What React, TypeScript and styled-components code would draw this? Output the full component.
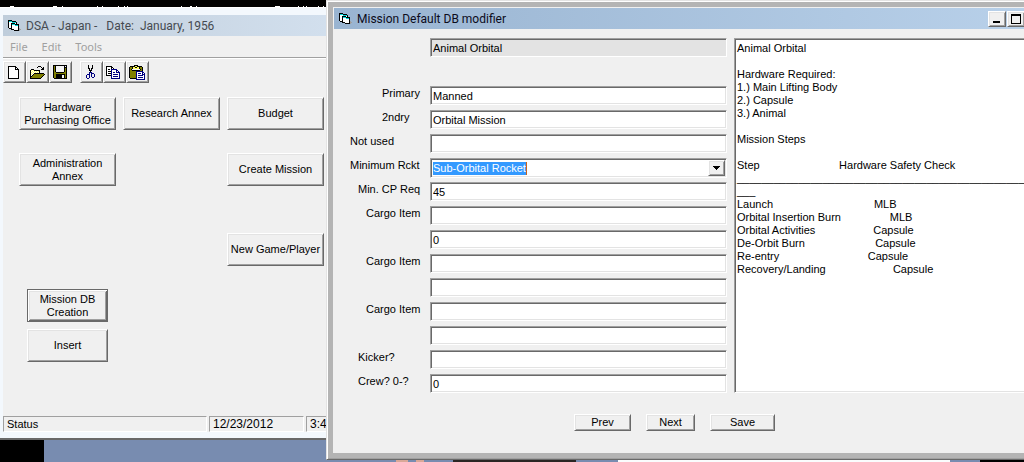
import React, { useRef } from "react";
import styled, { createGlobalStyle, css } from "styled-components";

const GlobalStyle = createGlobalStyle`
  * { box-sizing: border-box; }
  html, body { margin: 0; padding: 0; }
  body {
    font-family: "Liberation Sans", Arial, sans-serif;
    font-size: 11px;
    line-height: 13px;
    color: #000;
    overflow: hidden;
  }
  button, input, select, textarea { font: inherit; color: inherit; }
`;

const face = "#f0f0f0";

const raised = css`
  border: 1px solid;
  border-color: #fff #696969 #696969 #fff;
  box-shadow: inset 1px 1px #e3e3e3, inset -1px -1px #a0a0a0;
`;

const sunken = css`
  border: 1px solid;
  border-color: #a0a0a0 #fff #fff #a0a0a0;
  box-shadow: inset 1px 1px #696969, inset -1px -1px #e3e3e3;
`;

/* ---------- pixel icons ---------- */

const palette: Record<string, string> = {
  k: "#000000",
  w: "#ffffff",
  c: "#00d8d8",
  g: "#a0a0a0",
  o: "#808000",
  y: "#ffff60",
  l: "#f4f4f4",
  n: "#000080",
};

function PixelIcon({ rows }: { rows: string[] }) {
  const width = Math.max(...rows.map((r) => r.length));
  return (
    <svg
      width={width}
      height={rows.length}
      viewBox={`0 0 ${width} ${rows.length}`}
      shapeRendering="crispEdges"
      aria-hidden="true"
    >
      {rows.flatMap((row, y) =>
        row.split("").map((ch, x) =>
          palette[ch] ? (
            <rect key={`${x}-${y}`} x={x} y={y} width="1" height="1" fill={palette[ch]} />
          ) : null
        )
      )}
    </svg>
  );
}

const formIcon = [
  "kkkk.........",
  "kccckkkk.....",
  "kwwwcccck....",
  "kwwkkkkwk....",
  "kwwkccckkkk..",
  "kwwkwwwccck..",
  "kwwkwwwwwwk..",
  "kwwkwwwwwwk..",
  ".kkkwwwwwwkg.",
  "...kkkwwwwkgg",
  "......kkkkkg.",
];

const newIcon = [
  "kkkkkkkk...",
  "kwwwwwwkk..",
  "kwwwwwwkwk.",
  "kwwwwwwkkkk",
  "kwwwwwwwwwk",
  "kwwwwwwwwwk",
  "kwwwwwwwwwk",
  "kwwwwwwwwwk",
  "kwwwwwwwwwk",
  "kwwwwwwwwwk",
  "kwwwwwwwwwk",
  "kwwwwwwwwwk",
  "kkkkkkkkkkk",
];

const openIcon = [
  ".........kkk....",
  "........k...k.k.",
  ".............kk.",
  "..kkk.......kkk.",
  ".kywykkkkkk.....",
  ".kwywywywyk.....",
  ".kywywywywk.....",
  ".kwywkkkkkkkkkk.",
  ".kywkooooooooook",
  ".kwkooooooooook.",
  ".kkooooooooook..",
  ".kooooooooook...",
  ".kkkkkkkkkkk....",
];

const saveIcon = [
  "kkkkkkkkkkkkkk",
  "kokllllllllklk",
  "kokllllllllkkk",
  "kokllllllllkok",
  "kokllllllllkok",
  "kokllllllllkok",
  "kokllllllllkok",
  "kookkkkkkkkook",
  "kooooooooooook",
  "kookkkkkkkkkok",
  "kookkkkkkllkok",
  "kookkkkkkllkok",
  "kookkkkkkllkok",
  ".kkkkkkkkkkkkk",
];

const cutIcon = [
  "..k...k..",
  "..k...k..",
  "..k...k..",
  "..kk.kk..",
  "...k.k...",
  "...kkk...",
  "....k....",
  "...nnn...",
  "...n.nnn.",
  ".nnn.n..n",
  "n..n.n..n",
  "n..n.n..n",
  "n..n..nn.",
  ".nn......",
];

const copyIcon = [
  "kkkkkk.........",
  "kwwwwkk........",
  "kwwwwkwk.......",
  "kwkkwnnnnnn....",
  "kwwwwnwwwwnn...",
  "kwkkknwwwwnwn..",
  "kwwwwnwnnwnnnn.",
  "kwkkknwwwwwwwn.",
  "kwwwwnwnnnnnwn.",
  "kkkkknwwwwwwwn.",
  ".....nwnnnnnwn.",
  ".....nwwwwwwwn.",
  ".....nnnnnnnnn.",
];

const pasteIcon = [
  ".....kkkk.......",
  ".kkkkkyykkkkk...",
  "kookyykkyykook..",
  "kookyyyyyykook..",
  "kokllllllllkok..",
  "kookkkkkkkkook..",
  "koooooonnnnnnn..",
  "koooooonwwwwwnn.",
  "koooooonwnnnwnwn",
  "koooooonwwwwwnnn",
  "koooooonwnnnnnwn",
  "koooooonwwwwwwwn",
  "koooooonwnnnnnwn",
  ".kkkkkknwwwwwwwn",
  ".......nnnnnnnnn",
];

/* ---------- desktop ---------- */

const Desktop = styled.main`
  position: relative;
  min-height: 100vh;
  overflow: hidden;
  background: linear-gradient(
    to right,
    #000 44px,
    #788cb0 44px 396px,
    #d9a898 396px 408px,
    #788cb0 408px 416px,
    #d9a898 416px 424px,
    #788cb0 424px 453px,
    #2a2624 453px 576px,
    #788cb0 576px 618px,
    #fafcfd 618px 950px,
    #788cb0 950px 980px,
    #000 980px
  );
`;

const TopStrip = styled.div`
  height: 7px;
  background: #000;
  display: flex;
  align-items: flex-end;
`;

/* ---------- windows ---------- */

const MainWindow = styled.section`
  position: absolute;
  top: 7px;
  left: 0;
  width: 420px;
  padding: 7px 6px 6px 3px;
  background: #f3f8fd;
  border-top: 1px solid #fff;
  border-bottom: 2px solid #696969;
`;

const Dialog = styled.section`
  position: absolute;
  top: 0;
  left: 326px;
  right: -29px;
  border: 1px solid;
  border-color: #e3e3e3 #696969 #696969 #e3e3e3;
  box-shadow: inset 1px 1px #fff, inset -1px -1px #a0a0a0;
  background: #b4b4b4;
  padding: 6px;
`;

const DialogInner = styled.div`
  background: ${face};
  border-top: 1px solid ${face};
  border-left: 1px solid ${face};
`;

const TitleBar = styled.header<{ $active?: boolean }>`
  display: flex;
  align-items: center;
  height: 21px;
  padding: 0 2px 0 5px;
  gap: 5px;
  color: ${(p) => (p.$active ? "#0c0c1c" : "#454a50")};
  background: ${(p) =>
    p.$active
      ? "linear-gradient(to right, #99b4d1, #b9d1ea)"
      : "linear-gradient(to right, #bfcddb, #d7e4f2)"};
`;

const Title = styled.h1`
  flex: 1;
  margin: 0;
  font: 400 12px/16px Roboto, "Noto Sans", sans-serif;
  white-space: pre;
`;

const CaptionButton = styled.button`
  ${raised}
  width: 18px;
  height: 16px;
  padding: 0;
  background: ${face};
  display: grid;
  place-items: center;
`;

const CaptionGroup = styled.div`
  display: flex;
  gap: 1px;
`;

const Body = styled.div`
  background: ${face};
`;

/* ---------- main window parts ---------- */

const MenuBar = styled.nav`
  display: flex;
  height: 21px;
  padding: 0 7px;
  gap: 14px;
  align-items: center;
`;

const MenuItem = styled.button`
  border: 0;
  padding: 0;
  background: none;
  color: #a0a0a0;
  font-family: "Noto Sans", sans-serif;
  font-size: 11px;
  line-height: 15px;
`;

const ToolBar = styled.div`
  display: flex;
  gap: 8px;
  padding-top: 3px;
  border-top: 1px solid #a0a0a0;
  box-shadow: inset 0 1px #fff;
`;

const ToolGroup = styled.div`
  display: flex;
`;

const ToolButton = styled.button`
  ${raised}
  width: 23px;
  height: 22px;
  padding: 0 2px 0 0;
  background: ${face};
  display: grid;
  place-items: center;
`;

const Launcher = styled.div`
  display: flex;
  flex-direction: column;
  gap: 23px;
  padding: 14px 16px 54px;
`;

const LauncherRow = styled.div<{ $spaced?: boolean }>`
  display: grid;
  grid-template-columns: repeat(3, 97px);
  gap: 7px;
  margin-top: ${(p) => (p.$spaced ? "24px" : "0")};
`;

const LauncherStack = styled.div`
  display: flex;
  flex-direction: column;
  gap: 7px;
  width: 81px;
  margin-left: 8px;
`;

const CommandButton = styled.button<{ $column?: number; $current?: boolean }>`
  ${raised}
  height: 33px;
  padding: 0 2px;
  background: ${face};
  text-align: center;
  grid-column: ${(p) => p.$column ?? "auto"};
  ${(p) =>
    p.$current &&
    css`
      border-color: #696969;
      box-shadow: inset 1px 1px #fff, inset -1px -1px #696969, inset 2px 2px #e3e3e3,
        inset -2px -2px #a0a0a0;
    `}
`;

const StatusBar = styled.footer`
  display: grid;
  grid-template-columns: 204px 95px 1fr;
  gap: 2px;
`;

const StatusPanel = styled.div`
  height: 16px;
  padding: 1px 3px;
  border: 1px solid;
  border-color: #a0a0a0 #fff #fff #a0a0a0;
`;

const StatusNumber = styled(StatusPanel)`
  font-size: 12px;
`;

/* ---------- dialog parts ---------- */

const Editor = styled.form`
  padding: 9px 16px 22px;
`;

const Columns = styled.div`
  display: flex;
  gap: 7px;
  align-items: stretch;
  margin-right: -8px;
`;

const Fields = styled.div`
  flex: none;
  display: grid;
  gap: 5px;
`;

const FieldRow = styled.div`
  display: grid;
  grid-template-columns: 80px 297px;
  height: 19px;
`;

const HeaderRow = styled(FieldRow)`
  margin-bottom: 24px;
`;

const Label = styled.label<{ $indent: number }>`
  padding-top: 1px;
  padding-left: ${(p) => p.$indent * 8}px;
  white-space: nowrap;
`;

const TextInput = styled.input`
  ${sunken}
  grid-column: 2;
  width: 100%;
  height: 19px;
  padding: 0 2px;
  border-radius: 0;
  background: #fff;
  outline: 0;
  &:read-only { background: #e3e3e3; }
`;

const Combo = styled.div`
  ${sunken}
  display: flex;
  align-items: center;
  justify-content: space-between;
  height: 20px;
  padding: 1px 1px 1px 2px;
  background: #fff;
`;

const ComboSelect = styled.select`
  appearance: none;
  border: 0;
  border-right: 1px solid #c8641e;
  border-radius: 0;
  padding: 0;
  height: 13px;
  line-height: 13px;
  background: #3399ff;
  color: #fff;
  outline: 0;
`;

const ComboArrow = styled.button`
  ${raised}
  width: 17px;
  height: 16px;
  padding: 0;
  background: ${face};
  display: grid;
  place-items: center;
`;

const Notes = styled.textarea`
  ${sunken}
  flex: 1;
  min-width: 0;
  padding: 3px 2px;
  border-radius: 0;
  background: #fff;
  resize: none;
  overflow: hidden;
  outline: 0;
`;

const Actions = styled.div`
  display: flex;
  gap: 15px;
  padding: 21px 0 0 224px;
`;

const ActionButton = styled.button<{ $width: number }>`
  ${raised}
  width: ${(p) => p.$width}px;
  height: 17px;
  padding: 0;
  line-height: 13px;
  background: ${face};
`;

/* ---------- data ---------- */

type Field = { id: string; label?: string; indent?: number; value: string; combo?: boolean };

const fields: Field[] = [
  { id: "primary", label: "Primary", indent: 4, value: "Manned" },
  { id: "secondary", label: "2ndry", indent: 4, value: "Orbital Mission" },
  { id: "unused", label: "Not used", indent: 0, value: "" },
  { id: "rocket", label: "Minimum Rckt", indent: 0, value: "Sub-Orbital Rocket", combo: true },
  { id: "cp", label: "Min. CP Req", indent: 1, value: "45" },
  { id: "cargo1", label: "Cargo Item", indent: 2, value: "" },
  { id: "cargo1-count", value: "0" },
  { id: "cargo2", label: "Cargo Item", indent: 2, value: "" },
  { id: "cargo2-count", value: "" },
  { id: "cargo3", label: "Cargo Item", indent: 2, value: "" },
  { id: "cargo3-count", value: "" },
  { id: "kicker", label: "Kicker?", indent: 1, value: "" },
  { id: "crew", label: "Crew? 0-?", indent: 1, value: "0" },
];

const step = (name: string, spaces: number, part: string) => name + " ".repeat(spaces) + part;

const notes = [
  "Animal Orbital",
  "",
  "Hardware Required:",
  "1.) Main Lifting Body",
  "2.) Capsule",
  "3.) Animal",
  "",
  "Mission Steps",
  "",
  step("Step", 26, "Hardware Safety Check"),
  "_".repeat(60),
  "___",
  step("Launch", 33, "MLB"),
  step("Orbital Insertion Burn", 16, "MLB"),
  step("Orbital Activities", 19, "Capsule"),
  step("De-Orbit Burn", 23, "Capsule"),
  step("Re-entry", 29, "Capsule"),
  step("Recovery/Landing", 22, "Capsule"),
].join("\n");

function RocketCombo({ id, value }: { id: string; value: string }) {
  const ref = useRef<HTMLSelectElement>(null);
  return (
    <Combo>
      <ComboSelect id={id} ref={ref} defaultValue={value}>
        <option>{value}</option>
      </ComboSelect>
      <ComboArrow type="button" aria-label="Show rockets" onClick={() => ref.current?.showPicker()}>
        <svg width="7" height="4" viewBox="0 0 7 4" shapeRendering="crispEdges">
          <path d="M0 0h7v1h-1v1h-1v1h-1v1h-1v-1h-1v-1h-1v-1h-1z" />
        </svg>
      </ComboArrow>
    </Combo>
  );
}

export default function App() {
  return (
    <Desktop>
      <GlobalStyle />
      <TopStrip>
        <svg width="326" height="1" viewBox="0 0 326 1" shapeRendering="crispEdges" aria-hidden="true">
          <path
            d="M10 0h4M53 0h4M62 0h1M97 0h1M102 0h1M118 0h1M124 0h1M127 0h1M181 0h1M190 0h2M196 0h1M275 0h5M298 0h1M303 0h1M306 0h1M318 0h1M323 0h1"
            stroke="#fff"
            strokeWidth="2"
          />
        </svg>
      </TopStrip>

      <MainWindow aria-label="DSA">
        <TitleBar>
          <PixelIcon rows={formIcon} />
          <Title>{"DSA - Japan -   Date:  January, 1956"}</Title>
        </TitleBar>
        <Body>
          <MenuBar>
            <MenuItem>File</MenuItem>
            <MenuItem>Edit</MenuItem>
            <MenuItem>Tools</MenuItem>
          </MenuBar>
          <ToolBar>
            <ToolGroup>
              <ToolButton aria-label="New"><PixelIcon rows={newIcon} /></ToolButton>
              <ToolButton aria-label="Open"><PixelIcon rows={openIcon} /></ToolButton>
              <ToolButton aria-label="Save file"><PixelIcon rows={saveIcon} /></ToolButton>
            </ToolGroup>
            <ToolGroup>
              <ToolButton aria-label="Cut"><PixelIcon rows={cutIcon} /></ToolButton>
              <ToolButton aria-label="Copy"><PixelIcon rows={copyIcon} /></ToolButton>
              <ToolButton aria-label="Paste"><PixelIcon rows={pasteIcon} /></ToolButton>
            </ToolGroup>
          </ToolBar>
          <Launcher>
            <LauncherRow>
              <CommandButton>Hardware Purchasing Office</CommandButton>
              <CommandButton>Research Annex</CommandButton>
              <CommandButton>Budget</CommandButton>
            </LauncherRow>
            <LauncherRow>
              <CommandButton>Administration<br />Annex</CommandButton>
              <CommandButton $column={3}>Create Mission</CommandButton>
            </LauncherRow>
            <LauncherRow $spaced>
              <CommandButton $column={3}>New Game/Player</CommandButton>
            </LauncherRow>
            <LauncherStack>
              <CommandButton $current>Mission DB Creation</CommandButton>
              <CommandButton>Insert</CommandButton>
            </LauncherStack>
          </Launcher>
          <StatusBar>
            <StatusPanel>Status</StatusPanel>
            <StatusNumber>12/23/2012</StatusNumber>
            <StatusNumber>3:45 PM</StatusNumber>
          </StatusBar>
        </Body>
      </MainWindow>

      <Dialog aria-label="Mission Default DB modifier">
        <DialogInner>
          <TitleBar $active>
            <PixelIcon rows={formIcon} />
            <Title>Mission Default DB modifier</Title>
            <CaptionGroup>
              <CaptionButton aria-label="Minimize">
                <svg width="10" height="9" shapeRendering="crispEdges"><path d="M1 7h7v2h-7z" /></svg>
              </CaptionButton>
              <CaptionButton aria-label="Maximize">
                <svg width="10" height="10" shapeRendering="crispEdges">
                  <path fillRule="evenodd" d="M0 0h10v10h-10zM1 2v7h8v-7z" />
                </svg>
              </CaptionButton>
              <CaptionButton aria-label="Close">
                <svg width="8" height="8"><path d="M0 0l8 8M8 0l-8 8" stroke="#000" strokeWidth="2" /></svg>
              </CaptionButton>
            </CaptionGroup>
          </TitleBar>
          <Editor onSubmit={(e) => e.preventDefault()}>
            <Columns>
              <Fields>
                <HeaderRow>
                  <TextInput aria-label="Mission name" defaultValue="Animal Orbital" readOnly />
                </HeaderRow>
                {fields.map((f) => (
                  <FieldRow key={f.id}>
                    {f.label && (
                      <Label htmlFor={f.id} $indent={f.indent ?? 0}>{f.label}</Label>
                    )}
                    {f.combo ? (
                      <RocketCombo id={f.id} value={f.value} />
                    ) : (
                      <TextInput
                        id={f.id}
                        defaultValue={f.value}
                        aria-label={f.label ? undefined : "Cargo quantity"}
                      />
                    )}
                  </FieldRow>
                ))}
              </Fields>
              <Notes aria-label="Mission notes" wrap="off" spellCheck={false} defaultValue={notes} />
            </Columns>
            <Actions>
              <ActionButton type="button" $width={57}>Prev</ActionButton>
              <ActionButton type="button" $width={49}>Next</ActionButton>
              <ActionButton type="submit" $width={65}>Save</ActionButton>
            </Actions>
          </Editor>
        </DialogInner>
      </Dialog>
    </Desktop>
  );
}
